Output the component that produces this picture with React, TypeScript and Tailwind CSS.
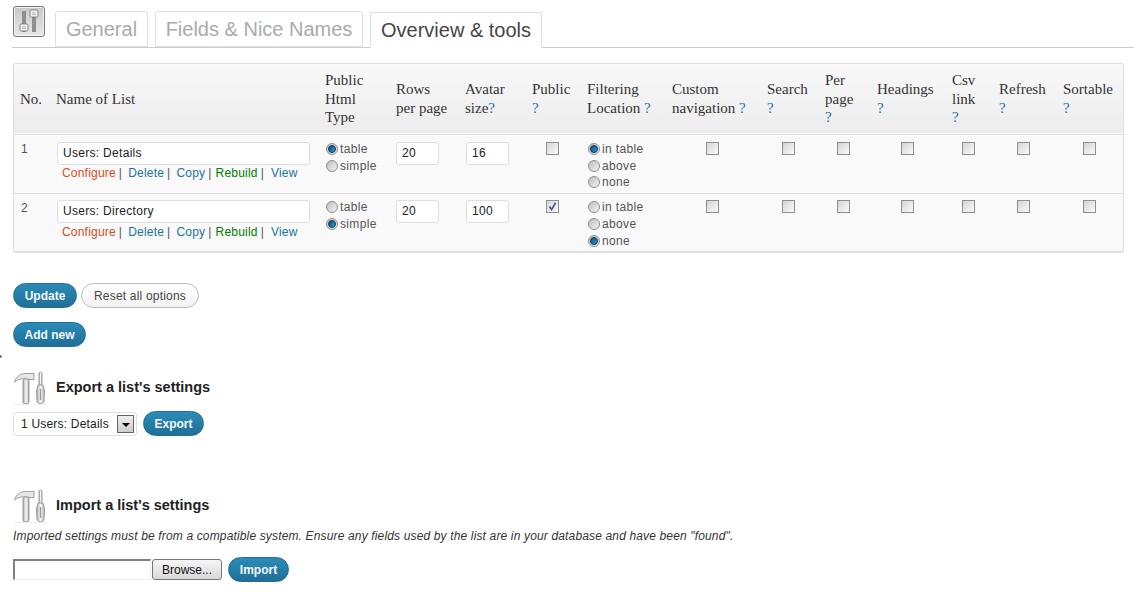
import * as React from 'react';

const sans = "font-['Liberation_Sans',Arial,sans-serif]";
const serif = "font-['Liberation_Serif','Times_New_Roman',serif]";

function Q() {
  return <span className="text-[#21759b]">?</span>;
}

function Radio({ on, label }: { on?: boolean; label: string }) {
  return (
    <label className="flex h-[16.6px] items-center gap-[2px] text-[12px] tracking-[0.35px] text-[#555]">
      <span className="flex size-[12px] items-center justify-center rounded-full border border-[#8f8f8f] bg-gradient-to-br from-[#bdbdbd] to-[#f4f4f4]">
        {on && (
          <span className="size-[8px] rounded-full border border-[#0d3d5c] bg-gradient-to-br from-[#0f4f78] to-[#2b9ad6]" />
        )}
      </span>
      {label}
    </label>
  );
}

function Check({ on }: { on?: boolean }) {
  return (
    <span className="flex size-[13px] items-center justify-center border border-[#8f8f8f] bg-gradient-to-br from-[#d4d4d4] to-[#fbfbfb]">
      {on && (
        <svg viewBox="0 0 11 11" className="size-[11px]">
          <path d="M2.5 5.5 L4.6 8.6 L8.6 1.8" fill="none" stroke="#4a5a9c" strokeWidth="1.8" />
        </svg>
      )}
    </span>
  );
}

function BlueButton({ children, className = '' }: { children: React.ReactNode; className?: string }) {
  return (
    <button className={`block h-[25px] rounded-full border border-[#1f6f97] bg-gradient-to-b from-[#2b8cb8] to-[#1f6f97] text-[12px] font-bold text-[#f4f8fa] ${className}`}>
      {children}
    </button>
  );
}

function ToolsIcon() {
  return (
    <svg viewBox="0 0 32 34" className="h-[34px] w-[32px] shrink-0">
      <defs>
        <linearGradient id="steel" x1="0" x2="1" y1="0" y2="0">
          <stop offset="0" stopColor="#a8a8a8" />
          <stop offset="0.5" stopColor="#f8f8f8" />
          <stop offset="1" stopColor="#b0b0b0" />
        </linearGradient>
      </defs>
      <path d="M0.5 11 C2 6 6 2.5 11 2.5 L20 2.5 L20 8.5 L15 8.5 C9 7 4 8 0.5 11 Z" fill="#e6e6e6" stroke="#8a8a8a" strokeWidth="0.8" />
      <rect x="9" y="8" width="6" height="24.5" rx="1.5" fill="url(#steel)" stroke="#8a8a8a" strokeWidth="0.8" />
      <rect x="25" y="1" width="3" height="13" rx="1.4" fill="url(#steel)" stroke="#8a8a8a" strokeWidth="0.8" />
      <path d="M24 14 L29 14 L30.5 20 L30 30 C29.8 32 28.5 32.5 26.5 32.5 C24.5 32.5 23.2 32 23 30 L22.5 20 Z" fill="url(#steel)" stroke="#8a8a8a" strokeWidth="0.8" />
      <rect x="25.9" y="18" width="1.2" height="11" fill="#999" />
      <rect x="0" y="33" width="32" height="1" fill="#eeeeee" />
    </svg>
  );
}

function SlidersIcon() {
  return (
    <div className="flex h-[31px] w-[32px] shrink-0 items-center justify-center rounded-[3px] border border-[#777] bg-gradient-to-b from-[#c8c8c8] to-[#e8e8e8] shadow-[inset_0_0_0_1px_#f2f2f2]">
      <svg viewBox="0 0 26 25" className="h-[25px] w-[26px]">
        <rect x="6" y="2" width="4" height="21" fill="#8f8f8f" />
        <rect x="16" y="2" width="4" height="21" fill="#8f8f8f" />
        <rect x="4" y="15" width="8" height="7" rx="1" fill="#eee" stroke="#777" strokeWidth="0.8" />
        <rect x="14" y="1" width="8" height="7" rx="1" fill="#eee" stroke="#777" strokeWidth="0.8" />
        <path d="M6 18h4M6 19.5h4M16 4h4M16 5.5h4" stroke="#aaa" strokeWidth="0.7" />
      </svg>
    </div>
  );
}

function Tab({ label, active, className }: { label: string; active?: boolean; className: string }) {
  return (
    <div
      className={`flex h-[36px] items-center justify-center rounded-t-[3px] border border-[#dfdfdf] text-[20px] ${className} ${
        active ? '-mb-px border-[#ccc] border-b-white bg-white text-[#464646]' : 'text-[#aaa]'
      }`}>
      {label}
    </div>
  );
}

const COLS = [35, 269, 71, 69, 67, 55, 85, 95, 58, 52, 75, 47, 64, 67];

const ROWS = [
  { no: 1, name: 'Users: Details', html: 'table', avatar: '16', pub: false, filter: 'in table' },
  { no: 2, name: 'Users: Directory', html: 'simple', avatar: '100', pub: true, filter: 'none' },
];

function TextBox({ value, className = '' }: { value: string; className?: string }) {
  return (
    <input
      readOnly
      value={value}
      className={`block h-[23px] rounded-[3px] border border-[#dfdfdf] bg-white px-[5px] text-[12px] tracking-[0.3px] text-[#222] outline-none ${className}`}
    />
  );
}

function Sep({ className = 'mr-[6px]' }: { className?: string }) {
  return <span className={`ml-[3px] text-[#555] ${className}`}>|</span>;
}

function RowLinks({ className = '' }: { className?: string }) {
  return (
    <div className={`pl-[5px] text-[12px] tracking-[0.2px] text-[#21759b] ${className}`}>
      <span className="text-[#d54e21]">Configure</span>
      <Sep />
      <span>Delete</span>
      <Sep />
      <span>Copy</span>
      <Sep className="mr-[4px]" />
      <span className="text-[#008000]">Rebuild</span>
      <Sep className="mr-[7px]" />
      <span>View</span>
    </div>
  );
}

function Head({ children, className = 'px-[7px]' }: { children: React.ReactNode; className?: string }) {
  return <th className={`text-left align-middle font-normal ${className}`}>{children}</th>;
}

function ListTable() {
  return (
    <div className="mx-[13px] mt-[15px] w-[1111px] overflow-hidden rounded-[3px] border border-b-[2px] border-[#dfdfdf] bg-[#f9f9f9]">
      <table className="w-full table-fixed border-collapse">
        <colgroup>
          {COLS.map((w, i) => (
            <col key={i} style={{ width: w }} />
          ))}
        </colgroup>
        <thead>
          <tr className={`h-[70px] border-b border-[#dfdfdf] bg-gradient-to-b from-[#f9f9f9] to-[#ececec] text-[15px] leading-[18.5px] text-[#333] ${serif}`}>
            <Head className="px-[6px]">No.</Head>
            <Head>Name of List</Head>
            <Head>Public Html Type</Head>
            <Head>Rows per page</Head>
            <Head>Avatar size<Q /></Head>
            <Head>Public <Q /></Head>
            <Head>Filtering Location <Q /></Head>
            <Head>Custom navigation <Q /></Head>
            <Head>Search <Q /></Head>
            <Head>Per page <Q /></Head>
            <Head>Headings <Q /></Head>
            <Head>Csv link <Q /></Head>
            <Head>Refresh <Q /></Head>
            <Head>Sortable <Q /></Head>
          </tr>
        </thead>
        <tbody>
          {ROWS.map((r) => {
            const first = r.no === 1;
            const inputPad = first ? 'pt-[7px]' : 'pt-[6px]';
            const radioPad = first ? 'pt-[6.4px]' : 'pt-[5.6px]';
            const checkPad = first ? 'pt-[7px]' : 'pt-[6px]';
            return (
              <tr key={r.no} className="h-[59px] border-b border-[#dfdfdf] last:h-[58px] last:border-b-0">
                <td className="px-[7px] pt-[5px] align-top text-[12px] text-[#555]">{r.no}</td>
                <td className={`px-[8px] align-top ${inputPad}`}>
                  <TextBox value={r.name} className="w-[253px]" />
                  <RowLinks className={first ? '-mt-px' : ''} />
                </td>
                <td className={`px-[8px] align-top ${radioPad}`}>
                  <Radio on={r.html === 'table'} label="table" />
                  <Radio on={r.html === 'simple'} label="simple" />
                </td>
                <td className={`px-[7px] align-top ${inputPad}`}>
                  <TextBox value="20" className="w-[43px]" />
                </td>
                <td className={`px-[8px] align-top ${inputPad}`}>
                  <TextBox value={r.avatar} className="w-[43px]" />
                </td>
                <td className={`px-[21px] align-top ${checkPad}`}>
                  <Check on={r.pub} />
                </td>
                <td className={`px-[8px] align-top ${radioPad}`}>
                  {['in table', 'above', 'none'].map((f) => (
                    <Radio key={f} on={r.filter === f} label={f} />
                  ))}
                </td>
                {[41, 22, 19, 31, 17, 25, 27].map((pad, i) => (
                  <td key={i} className={`align-top ${checkPad}`} style={{ paddingLeft: pad }}>
                    <Check />
                  </td>
                ))}
              </tr>
            );
          })}
        </tbody>
      </table>
    </div>
  );
}

function SectionTitle({ children }: { children: React.ReactNode }) {
  return (
    <div className="flex items-center gap-[10px] pl-[1px]">
      <ToolsIcon />
      <h3 className="text-[14.5px] font-bold text-[#222]">{children}</h3>
    </div>
  );
}

export default function App() {
  return (
    <div className={`relative h-[603px] w-[1134px] overflow-hidden bg-white ${sans}`}>
      {/* stray dot at the page edge */}
      <span className="absolute top-[355px] left-0 h-[3px] w-[2px] rounded-r-full bg-[#777]" />

      <div className="ml-[12px] flex h-[48px] items-end gap-[7px] border-b border-[#ccc] pl-[1px]">
        <div className="mt-[6px] mr-[3px] self-start">
          <SlidersIcon />
        </div>
        <Tab label="General" className="w-[93px]" />
        <Tab label="Fields & Nice Names" className="w-[208px]" />
        <Tab label="Overview & tools" active className="w-[172px]" />
      </div>

      <ListTable />

      <div className="mt-[30px] flex gap-[4px] pl-[13px]">
        <BlueButton className="w-[64px]">Update</BlueButton>
        <button className="h-[25px] w-[118px] rounded-full border border-[#bbb] bg-gradient-to-b from-white to-[#f2f2f2] text-[12px] tracking-[0.2px] text-[#464646]">
          Reset all options
        </button>
      </div>
      <div className="mt-[14px] pl-[13px]">
        <BlueButton className="w-[73px]">Add new</BlueButton>
      </div>

      <div className="mt-[24px] pl-[13px]">
        <SectionTitle>Export a list's settings</SectionTitle>
        <div className="mt-[6px] flex items-center gap-[6px]">
          <div className="flex h-[24px] w-[124px] items-center justify-between rounded-[3px] border border-[#dfdfdf] pr-[2px] pl-[7px] text-[12px] tracking-[0.2px] text-[#222]">
            1 Users: Details
            <span className="flex h-[18px] w-[17px] items-center justify-center border border-[#666] bg-gradient-to-b from-[#eee] to-[#ccc]">
              <span className="mt-[2px] border-x-[4px] border-t-[4px] border-x-transparent border-t-black" />
            </span>
          </div>
          <BlueButton className="w-[61px]">Export</BlueButton>
        </div>
      </div>

      <div className="mt-[53px] pl-[13px]">
        <SectionTitle>Import a list's settings</SectionTitle>
        <p className="mt-[4px] text-[12px] tracking-[0.15px] text-[#333] italic">
          Imported settings must be from a compatible system. Ensure any fields used by the list are in your database and have been "found".
        </p>
        <div className="mt-[12px] flex items-center">
          <div className="h-[21px] w-[138px] border-t-2 border-r border-b border-l-2 border-t-[#808080] border-r-[#eee] border-b-[#eee] border-l-[#808080] bg-white" />
          <button className="ml-px h-[21px] w-[70px] rounded-[3px] border border-[#777] bg-gradient-to-b from-[#f6f6f6] to-[#d8d8d8] text-[12px] text-[#111]">
            Browse...
          </button>
          <BlueButton className="ml-[6px] w-[61px]">Import</BlueButton>
        </div>
      </div>
    </div>
  );
}
